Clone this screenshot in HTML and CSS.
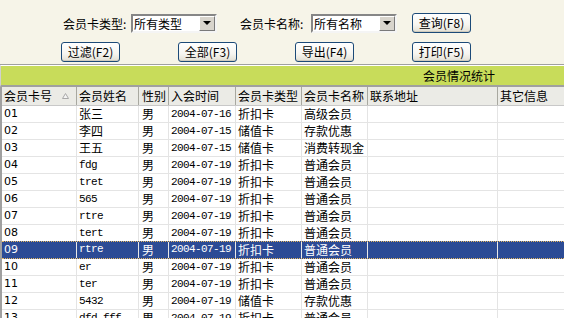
FILE: index.html
```html
<!DOCTYPE html>
<html lang="zh-CN">
<head>
    <meta charset="UTF-8">
    <title>会员情况统计</title>
    <link rel="stylesheet" href="styles.css">
</head>
<body>
    <div class="toolbar">
        <div class="filters">
            <span class="label">会员卡类型:</span>
            <div class="combo"><span>所有类型</span><i class="drop"></i></div>
            <span class="label label-name">会员卡名称:</span>
            <div class="combo"><span>所有名称</span><i class="drop"></i></div>
            <button class="btn btn-query">查询(F8)</button>
        </div>
        <div class="actions">
            <button class="btn">过滤(F2)</button>
            <button class="btn">全部(F3)</button>
            <button class="btn">导出(F4)</button>
            <button class="btn">打印(F5)</button>
        </div>
    </div>

    <div class="title-bar">会员情况统计</div>

    <div class="grid">
        <div class="row head">
            <div class="cell c1">会员卡号<svg class="sort" width="7" height="6" viewBox="0 0 7 6"><polygon points="3.5,0.5 6.5,5.5 0.5,5.5" fill="#f4f4f4" stroke="#a8a8a8" stroke-width="1"/></svg></div>
            <div class="cell c2">会员姓名</div>
            <div class="cell c3">性别</div>
            <div class="cell c4">入会时间</div>
            <div class="cell c5">会员卡类型</div>
            <div class="cell c6">会员卡名称</div>
            <div class="cell c7">联系地址</div>
            <div class="cell c8">其它信息</div>
        </div>
        <div id="rows"></div>
    </div>

    <script>
        // member rows: card no, name, date, card type, card name
        const members = [
            ['01', '张三', '2004-07-16', '折扣卡', '高级会员'],
            ['02', '李四', '2004-07-15', '储值卡', '存款优惠'],
            ['03', '王五', '2004-07-15', '储值卡', '消费转现金'],
            ['04', 'fdg', '2004-07-19', '折扣卡', '普通会员'],
            ['05', 'tret', '2004-07-19', '折扣卡', '普通会员'],
            ['06', '565', '2004-07-19', '折扣卡', '普通会员'],
            ['07', 'rtre', '2004-07-19', '折扣卡', '普通会员'],
            ['08', 'tert', '2004-07-19', '折扣卡', '普通会员'],
            ['09', 'rtre', '2004-07-19', '折扣卡', '普通会员'],
            ['10', 'er', '2004-07-19', '折扣卡', '普通会员'],
            ['11', 'ter', '2004-07-19', '折扣卡', '普通会员'],
            ['12', '5432', '2004-07-19', '储值卡', '存款优惠'],
            ['13', 'dfd-fff', '2004-07-19', '折扣卡', '普通会员']
        ];

        const isAscii = (s) => /^[\x00-\x7f]+$/.test(s);

        document.getElementById('rows').innerHTML = members.map((m, i) => `
            <div class="row${i === 8 ? ' selected' : ''}">
                <div class="cell c1 num">${m[0]}</div>
                <div class="cell c2${isAscii(m[1]) ? ' mono' : ''}">${m[1]}</div>
                <div class="cell c3">男</div>
                <div class="cell c4 mono">${m[2]}</div>
                <div class="cell c5">${m[3]}</div>
                <div class="cell c6">${m[4]}</div>
                <div class="cell c7"></div>
                <div class="cell c8"></div>
            </div>`).join('');
    </script>
</body>
</html>
```

FILE: styles.css
```css
body {
    margin: 0;
    font-family: "Noto Sans CJK SC", "Liberation Sans", sans-serif;
    font-size: 12px;
    color: #000;
    background: #fff;
    overflow: hidden;
}
.toolbar {
    height: 65px;
    box-sizing: border-box;
    padding-top: 13px;
    background: #f6f4e8;
    border-bottom: 1px solid #a0a0a0;
}
.filters {
    display: flex;
    align-items: center;
    height: 20px;
    padding-left: 63px;
}
.label {
    width: 68px;
    line-height: 19px;
}
.label-name {
    margin-left: 23px;
    width: 71px;
}
.combo {
    width: 86px;
    height: 19px;
    box-sizing: border-box;
    border: 2px solid;
    border-color: #868686 #f4f4f4 #f4f4f4 #868686;
    background: #fff;
    display: flex;
    align-items: center;
    justify-content: space-between;
    padding-left: 1px;
    line-height: 15px;
}
.drop {
    width: 16px;
    height: 15px;
    box-sizing: border-box;
    background: #d8d4cc;
    border: 1px solid;
    border-color: #fff #7a7a7a #7a7a7a #fff;
    display: flex;
    align-items: center;
    justify-content: center;
}
.drop::after {
    content: "";
    border-left: 4px solid transparent;
    border-right: 4px solid transparent;
    border-top: 4px solid #000;
}
.btn {
    width: 59px;
    height: 20px;
    padding: 0;
    font-family: "Noto Sans CJK SC", "Liberation Sans", sans-serif;
    font-size: 12px;
    line-height: 18px;
    color: #000;
    border: 1px solid #1c4a78;
    border-radius: 3px;
    background: linear-gradient(#ffffff 0%, #f6f5f0 60%, #e2dfd4 100%);
    box-shadow: inset 0 -1px 0 #cfcbbd;
}
.btn-query {
    margin-left: 15px;
}
.actions {
    display: flex;
    gap: 58px;
    margin-top: 9px;
    padding-left: 61px;
}
.title-bar {
    height: 19px;
    line-height: 19px;
    border-top: 1px solid #fff;
    border-bottom: 2px solid #a0a0a0;
    border-left: 1px solid #d0d0d0;
    background: #c8dc5a;
    padding-left: 422px;
}
.grid {
    border-left: 2px solid #a0a0a0;
}
.row {
    display: flex;
    height: 17px;
    box-sizing: border-box;
    border-bottom: 1px solid #e4e4e4;
    line-height: 16px;
    white-space: nowrap;
}
.row.head {
    height: 19px;
    line-height: 18px;
    background: #ebebe6;
    border-bottom: 1px solid #c8c8c8;
}
.cell {
    box-sizing: border-box;
    flex: none;
    padding-left: 2px;
    overflow: hidden;
    border-right: 1px solid #e4e4e4;
}
.head .cell {
    border-right-color: #a8a8a0;
}
.c1 { width: 75px; }
.c2 { width: 62px; }
.c3 { width: 30px; }
.c4 { width: 67px; }
.c5 { width: 66px; }
.c6 { width: 66px; }
.c7 { width: 130px; }
.c8 { width: 80px; }
.head .c1 {
    display: flex;
    align-items: center;
    justify-content: space-between;
    padding-right: 7px;
}
.c3 { padding-left: 3px; }
.num {
    font-family: "DejaVu Sans", sans-serif;
    font-size: 11px;
}
.mono {
    font-family: "Liberation Mono", monospace;
    font-size: 11px;
    letter-spacing: -0.6px;
}
.row.selected {
    background: #2c4b95;
    color: #fff;
    border-top: 1px dotted #e8b860;
    border-bottom: 1px dotted #e8b860;
    line-height: 15px;
    margin-top: -1px;
    height: 18px;
}
.row.selected .cell {
    border-right-color: #e8e8e8;
}
```
